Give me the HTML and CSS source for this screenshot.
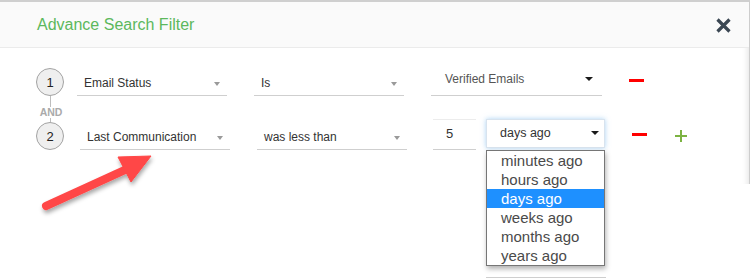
FILE: index.html
```html
<!DOCTYPE html>
<html lang="en">
<head>
<meta charset="utf-8">
<title>Advance Search Filter</title>
<link rel="stylesheet" href="styles.css">
</head>
<body>
<div class="modal">
  <div class="header">
    <div class="title">Advance Search Filter</div>
    <svg class="close" width="15" height="15" viewBox="0 0 15 15" aria-label="Close">
      <path d="M1.5 1.5 L13.5 13.5 M13.5 1.5 L1.5 13.5" stroke="#3b4753" stroke-width="3.2" fill="none"/>
    </svg>
  </div>
  <div class="body">
    <div class="row">
      <div class="step">1</div>
      <div class="field">Email Status<span class="caret"></span></div>
      <div class="field">Is<span class="caret"></span></div>
      <div class="field field-native">Verified Emails<span class="caret caret-dark"></span></div>
      <div class="minus"></div>
    </div>
    <div class="and">
      <span class="and-line-top"></span>
      <span class="and-text">AND</span>
      <span class="and-line-bottom"></span>
    </div>
    <div class="row row-second">
      <div class="step">2</div>
      <div class="field">Last Communication<span class="caret"></span></div>
      <div class="field field-tight">was less than<span class="caret"></span></div>
      <div class="num">5</div>
      <div class="unit">days ago<span class="caret caret-dark"></span>
        <ul class="options">
          <li>minutes ago</li>
          <li>hours ago</li>
          <li class="selected">days ago</li>
          <li>weeks ago</li>
          <li>months ago</li>
          <li>years ago</li>
        </ul>
        <span class="ghost-line"></span>
      </div>
      <div class="minus minus-second"></div>
      <svg class="plus" width="12" height="12" viewBox="0 0 12 12" aria-label="Add">
        <path d="M6 0 V12 M0 6 H12" stroke="#7cb342" stroke-width="2" fill="none"/>
      </svg>
    </div>
  </div>
</div>
<svg class="arrow" width="750" height="278" viewBox="0 0 750 278" aria-hidden="true">
  <defs>
    <filter id="sh" x="-20%" y="-20%" width="140%" height="160%">
      <feDropShadow dx="1" dy="3" stdDeviation="2" flood-color="#000" flood-opacity="0.35"/>
    </filter>
  </defs>
  <g filter="url(#sh)" fill="#ff4646" stroke="#ff4646">
    <line x1="46" y1="206" x2="127" y2="169" stroke-width="8" stroke-linecap="round"/>
    <polygon points="151,156 118,157 131,182" stroke-width="1" stroke-linejoin="round"/>
  </g>
</svg>
</body>
</html>
```
FILE: styles.css
```css
body {
  margin: 0;
  width: 750px;
  height: 278px;
  overflow: hidden;
  position: relative;
  background: #fff;
  font-family: "Liberation Sans", Arial, sans-serif;
}

.modal {
  width: 750px;
  height: 184px;
  box-sizing: border-box;
  border-top: 2px solid #cfcfcf;
  border-right: 1px solid #cdcdcd;
  box-shadow: inset -7px 0 6px -6px rgba(0, 0, 0, 0.12);
}

.header {
  height: 45px;
  background: #fafafa;
  border-bottom: 1px solid #ebebeb;
  display: flex;
  align-items: center;
  justify-content: space-between;
  padding: 0 18px 0 37px;
}

.title {
  font-size: 16px;
  color: #5cb85c;
  margin-top: 1px;
}

.close {
  display: block;
  margin-top: 1px;
}

.body {
  padding: 20px 0 0 36px;
}

.row {
  display: flex;
  align-items: flex-end;
  height: 28px;
}

.step {
  width: 28px;
  height: 28px;
  box-sizing: border-box;
  flex: none;
  border-radius: 50%;
  border: 1px solid #a3a3a3;
  background: #efefef;
  display: flex;
  align-items: center;
  justify-content: center;
  font-size: 13px;
  color: #222;
  margin-right: 13px;
}

.row-second .step {
  margin-right: 16px;
}

.field {
  width: 150px;
  height: 28px;
  box-sizing: border-box;
  flex: none;
  border-bottom: 1px solid #cfcfcf;
  display: flex;
  align-items: center;
  justify-content: space-between;
  padding: 2px 7px 0 7px;
  font-size: 12px;
  color: #333;
  margin-right: 27px;
}

.field .caret {
  margin-top: 3px;
}

.field-tight {
  margin-right: 26px;
}

.field-native {
  width: 171px;
  padding: 0 9px 5px 14px;
  color: #555;
}

.field-native .caret {
  margin-top: 0;
}

.caret {
  width: 0;
  height: 0;
  border-left: 3.5px solid transparent;
  border-right: 3.5px solid transparent;
  border-top: 4px solid #9a9a9a;
}

.caret-dark {
  border-top-color: #1a1a1a;
  border-left-width: 4px;
  border-right-width: 4px;
  border-top-width: 4.5px;
}

.minus {
  width: 15px;
  height: 3px;
  background: #ff0000;
  margin-bottom: 14px;
  flex: none;
}

.minus-second {
  margin-left: 27px;
}

.and {
  width: 28px;
  height: 26px;
  display: flex;
  flex-direction: column;
  align-items: center;
}

.and-line-top {
  width: 1px;
  height: 11px;
  background: #bdbdbd;
}

.and-line-bottom {
  width: 1px;
  flex: 1;
  background: #bdbdbd;
}

.and-text {
  font-size: 10.5px;
  line-height: 11px;
  font-weight: bold;
  color: #aaa;
  margin-left: 2px;
}

.num {
  width: 43px;
  height: 31px;
  box-sizing: border-box;
  flex: none;
  border-top: 1px solid #ececec;
  border-bottom: 1px solid #cfcfcf;
  padding: 0 0 2px 13px;
  display: flex;
  align-items: center;
  font-size: 13px;
  color: #333;
  margin-right: 10px;
}

.unit {
  position: relative;
  width: 119px;
  height: 29px;
  box-sizing: border-box;
  flex: none;
  border: 1px solid #d8e3ee;
  background: #fff;
  box-shadow: 0 0 5px rgba(102, 175, 233, 0.55);
  margin-bottom: 2px;
  display: flex;
  align-items: center;
  justify-content: space-between;
  padding: 0 5px 2px 13px;
  font-size: 12.5px;
  color: #333;
}

.options {
  position: absolute;
  left: -1px;
  top: 30px;
  width: 119px;
  box-sizing: border-box;
  margin: 0;
  padding: 0;
  list-style: none;
  background: #fff;
  border: 1px solid #767676;
  box-shadow: 1px 3px 5px rgba(0, 0, 0, 0.3);
  z-index: 2;
}

.options li {
  height: 19px;
  line-height: 19px;
  padding-left: 14px;
  font-size: 15px;
  color: #4a4a4a;
}

.options li.selected {
  background: #1e90ff;
  color: #fff;
}

.ghost-line {
  position: absolute;
  left: -1px;
  top: 157px;
  width: 120px;
  height: 1px;
  background: #cfcfcf;
}

.plus {
  display: block;
  flex: none;
  margin-left: 28px;
  margin-bottom: 8px;
}

.arrow {
  position: absolute;
  left: 0;
  top: 0;
  pointer-events: none;
}
```
